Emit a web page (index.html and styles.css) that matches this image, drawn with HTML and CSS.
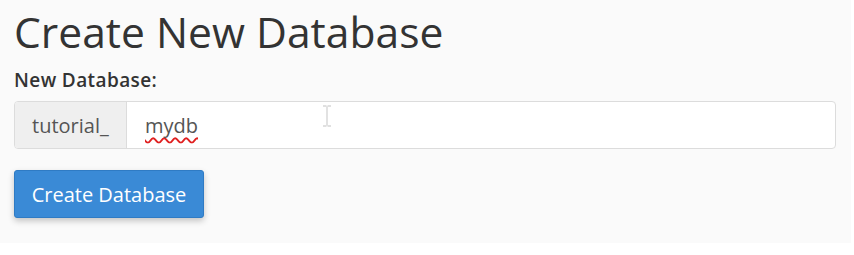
FILE: index.html
```html
<!DOCTYPE html>
<html lang="en">
<head>
<meta charset="utf-8">
<title>Create New Database</title>
<link rel="stylesheet" href="styles.css">
</head>
<body>
<div class="page">
  <h1 class="title">Create New Database</h1>
  <label class="label" for="db">New Database:</label>
  <div class="input-group">
    <span class="addon">tutorial_</span>
    <div class="field" id="db">
      <span class="value">mydb</span>
      <svg class="ibeam" width="10" height="22" viewBox="0 0 10 22" aria-hidden="true">
        <path d="M1 1h3.5M5.5 1H9M5 1.5v19M1 21h3.5M5.5 21H9" stroke="#d6d6d6" stroke-width="1.4" fill="none"/>
      </svg>
    </div>
  </div>
  <button class="btn" type="button">Create Database</button>
</div>
</body>
</html>
```
FILE: styles.css
```css
html, body {
  margin: 0;
  padding: 0;
  background: #ffffff;
}
.page {
  width: 851px;
  height: 243px;
  box-sizing: border-box;
  background: #fafafa;
  padding: 6px 15px 0 14px;
  font-family: "Open Sans", "Liberation Sans", sans-serif;
  display: flex;
  flex-direction: column;
  align-items: flex-start;
}
.title {
  margin: 0;
  font-size: 42.6px;
  font-weight: 400;
  line-height: 50px;
  color: #333333;
}
.label {
  margin-top: 12px;
  font-size: 19px;
  font-weight: 600;
  line-height: 24px;
  letter-spacing: 0.4px;
  color: #333333;
}
.input-group {
  margin-top: 9px;
  align-self: stretch;
  display: flex;
  height: 48px;
  box-sizing: border-box;
  border: 1px solid #dcdcdc;
  border-radius: 4px;
  background: #ffffff;
  overflow: hidden;
}
.addon {
  width: 112px;
  box-sizing: border-box;
  background: #efefef;
  border-right: 1px solid #dcdcdc;
  display: flex;
  align-items: center;
  padding-left: 17px;
  font-size: 20px;
  color: #555555;
}
.field {
  position: relative;
  flex: 1;
  display: flex;
  align-items: center;
  padding-left: 18px;
  font-size: 20px;
  color: #555555;
}
.value {
  text-decoration: underline wavy #e02020;
  text-decoration-thickness: 1.5px;
  text-underline-offset: 4px;
  text-decoration-skip-ink: none;
}
.ibeam {
  position: absolute;
  left: 195px;
  top: 3px;
}
.btn {
  margin-top: 21px;
  width: 190px;
  height: 48px;
  border: 1px solid #2f7bc4;
  border-radius: 3px;
  background: #3a8ad6;
  color: #ffffff;
  font-family: "Open Sans", "Liberation Sans", sans-serif;
  font-size: 20px;
  font-weight: 400;
  padding: 0;
  box-shadow: 0 3px 6px rgba(0, 0, 0, 0.22);
}
```
